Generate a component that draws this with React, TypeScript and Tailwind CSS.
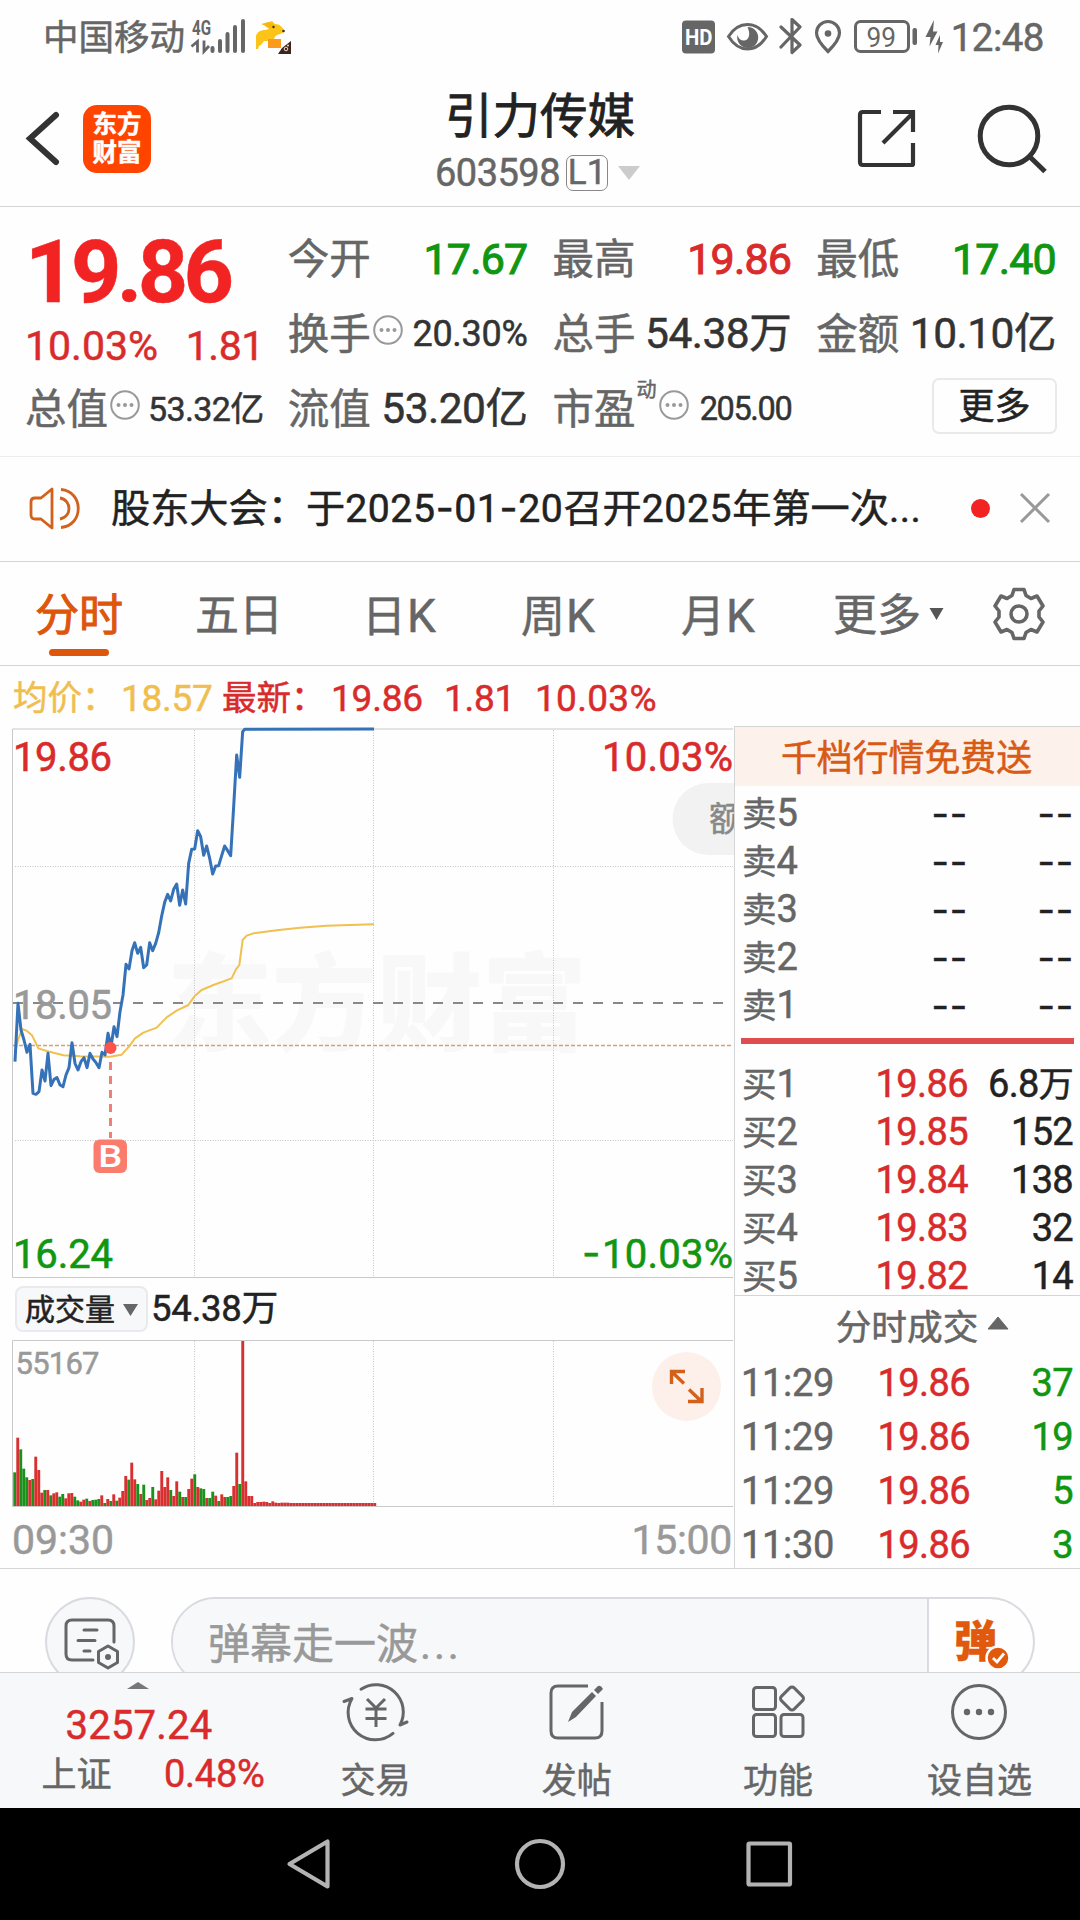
import type { ReactNode } from 'react';

const RED = '#d92b2b';

/* one-minute samples, [y] in chart units, 3 units per pixel */
const price = [
    [45, 1055], [54, 880], [63, 960], [72, 990], [81, 1027], [90, 1003], [99, 1150], [108, 1153], [117, 1145], [126, 1080],
    [135, 1113], [144, 1030], [153, 1127], [162, 1108], [171, 1103], [180, 1125], [189, 1130], [198, 1095], [207, 1073],
    [216, 998], [225, 1060], [234, 1080], [243, 1055], [252, 1043], [261, 1073], [270, 1030], [279, 1047], [288, 1058],
    [297, 1073], [306, 1027], [315, 1035], [324, 970], [333, 1010], [342, 950], [351, 980], [360, 905], [369, 855],
    [378, 763], [387, 777], [396, 722], [404, 698], [413, 730], [422, 712], [431, 773], [440, 765], [449, 698], [458, 722],
    [467, 700], [476, 668], [485, 618], [494, 577], [503, 553], [512, 573], [521, 538], [530, 522], [539, 586], [548, 540],
    [557, 582], [566, 460], [575, 418], [584, 417], [593, 362], [602, 380], [611, 436], [620, 408], [629, 445], [638, 492],
    [647, 468], [656, 467], [665, 437], [674, 408], [683, 422], [692, 437], [701, 290], [710, 135], [719, 202], [728, 65],
    [734, 58], [1122, 57],
];

const average = [
    [45, 1030], [54, 990], [66, 957], [80, 962], [96, 976], [106, 996], [115, 1015], [140, 1023], [190, 1036], [240, 1039],
    [330, 1040], [365, 1034], [385, 1012], [405, 985], [430, 968], [470, 953], [500, 922], [530, 902], [565, 885],
    [585, 857], [605, 840], [640, 825], [695, 805], [708, 778], [718, 765], [728, 690], [740, 677], [760, 670], [830, 661],
    [900, 653], [980, 647], [1050, 645], [1122, 643],
];

/* bar heights, g = falling minute, r = rising minute */
const volume =
    'g101 r205 g170 g112 g86 r78 g81 r148 r108 r40 g48 r48 g32 r38 r41 g28 g36 r23 r38 r39 g28 g17 r13 r19 g22 r15 g18 g19 g21 ' +
    'r32 g9 r21 g15 r35 g16 r25 r45 r90 g79 r130 r80 g66 r36 g64 r18 r24 g57 r20 r46 r105 r57 r86 g48 r30 r74 g43 r27 g27 r51 ' +
    'r82 g95 r57 g53 g51 r24 g24 g43 r31 g15 r35 r27 g27 g30 r60 r160 g66 r495 r74 r30 r30 r9 r12 r12 r13 r12 r9 r14 r10 r9 ' +
    'r10 r10 r10 r9 r9 r9 r9 r9 r9 r9 r9 r9 r9 r9 r9 r9 r9 r9 r9 r9 r9 r9 r9 r9 r9 r9 r9 r9 r9 r9 r9 r9';

const points = (list: number[][]) => list.map(([x, y]) => `${x / 3},${y / 3 + 710}`).join(' ');

const asks = ['5', '4', '3', '2', '1'];

const bids = [
    ['1', '19.86', '6.8万'],
    ['2', '19.85', '152'],
    ['3', '19.84', '138'],
    ['4', '19.83', '32'],
    ['5', '19.82', '14'],
];

const trades = [
    ['11:29', '37'],
    ['11:29', '19'],
    ['11:29', '5'],
    ['11:30', '3'],
];

function More() {
    return (
        <svg width="30" height="30" viewBox="0 0 30 30" className="relative -top-[5px] ml-[2px] shrink-0">
            <circle cx="15" cy="15" r="13.8" fill="none" stroke="#999" strokeWidth="2" />
            <g fill="#999"><circle cx="8.5" cy="15" r="2" /><circle cx="15" cy="15" r="2" /><circle cx="21.5" cy="15" r="2" /></g>
        </svg>
    );
}

function Stat({ label, children, className = '' }: { label: ReactNode; children: ReactNode; className?: string }) {
    return (
        <div className="flex items-center justify-between h-[75px]">
            <div className="flex items-center pt-[3px] text-[41.500px] text-[#666]">{label}</div>
            <div className={`pt-px text-[43px] tracking-[-0.8px] -mr-px ${className}`}>{children}</div>
        </div>
    );
}

function StatusBar() {
    return (
        <div className="flex items-center h-[76px] pl-[43px] pr-[36px] text-[#666]">
            <span className="pt-px text-[35.5px]">中国移动</span>
            <svg width="110" height="52" viewBox="188 12 110 52" className="ml-[3px]">
                <text x="192" y="34.500" fontSize="20" fontWeight="700" fill="#666" textLength="19" lengthAdjust="spacingAndGlyphs">4G</text>
                <path d="M191.500 46.500l6-5v11M204 40.500v11l5-5.500" fill="none" stroke="#666" strokeWidth="2.800" />
                <path d="M212.500 48v3M220 41v10M227.500 34v17M235 27v24M243 21v30" stroke="#666" strokeWidth="4" strokeLinecap="round" />
                <path d="M256 49v-13c1-4 5-6 9-6l4-1-4-3 1-3 6-2 3 3c5 0 7 3 9 6 1 2-1 3-4 4-5 1-6 4-6 7h-10l-3 4-2 1-1 3z" fill="#fcc419" />
                <path d="M261 24l8-2 6 4-4 2z" fill="#f5b70d" />
                <circle cx="273.500" cy="27" r="1.200" fill="#333" /><circle cx="283.500" cy="31" r="1.300" fill="#333" />
                <path d="M268 39h13v9h-13z" fill="#fb9a1c" />
                <path d="M278 54l4-6 9-7v13z" fill="#40241a" />
                <circle cx="286" cy="49" r="1.800" fill="none" stroke="#e8dcd6" /><circle cx="288" cy="45.500" r="1" fill="#e8dcd6" />
            </svg>
            <svg width="268" height="40" viewBox="678 18 268 40" className="ml-auto">
                <rect x="681" y="20.500" width="33" height="33" rx="4" fill="#666" />
                <text x="684" y="44.500" fontSize="21.500" fontWeight="700" fill="#fff" textLength="27.500" lengthAdjust="spacingAndGlyphs">HD</text>
                <path d="M727.500 36.500c5-8 12-12 19-12s14 4 19 12c-5 8-12 12.500-19 12.500s-14-4.500-19-12.500z" fill="none" stroke="#666" strokeWidth="3" />
                <path d="M746.500 27a10.500 10.500 0 1 1-10 8c1 4 4 6 7 5.500 5-1 6-7 3-13.500z" fill="#666" />
                <path d="M780 27l19 18-8 7.500v-33l8 7.500-19 20" fill="none" stroke="#666" strokeWidth="3.200" strokeLinecap="round" strokeLinejoin="round" />
                <path d="M827 51.500c-6-6-11.500-12-11.500-18.500a11.500 11.500 0 0 1 23 0c0 6.500-5.500 12.500-11.500 18.500z" fill="none" stroke="#666" strokeWidth="3.200" />
                <circle cx="827" cy="33.500" r="3.300" fill="#666" />
                <rect x="854.500" y="21.500" width="53" height="30" rx="5" fill="none" stroke="#666" strokeWidth="3" />
                <text x="865.500" y="46.500" fontSize="28" fill="#666" textLength="29.500" lengthAdjust="spacingAndGlyphs">99</text>
                <rect x="911.500" y="28" width="4.500" height="17" rx="2" fill="#666" />
                <path d="M933 20l-8.500 17h5l-1 9.500 8-15h-4.500zM939 35l-4.500 10h3l-.5 8.500 5-11.500h-3z" fill="#666" />
            </svg>
            <span className="ml-[4px] text-[38.500px] tracking-[-0.5px]">12:48</span>
        </div>
    );
}

function Header() {
    return (
        <div className="flex items-center h-[131px] pl-[25px] pr-[32px] pb-1 border-b border-[#d4d5d7]">
            <svg width="36" height="60" viewBox="25 110 36 60">
                <path d="M56 116L30 139.500 56 163" fill="none" stroke="#333" strokeWidth="6" strokeLinecap="round" />
            </svg>
            <div className="ml-[22px] w-[68px] h-[68px] rounded-[14px] bg-[#ff4400] flex flex-col items-center justify-center gap-[4px] text-white font-bold text-[24.5px]">
                <span>东方</span>
                <span>财富</span>
            </div>
            <div className="flex-1 flex flex-col items-center pl-[81px]">
                <h1 className="text-[47.500px] [-webkit-text-stroke:0.9px] text-[#222] mt-[8px] -ml-[9px]">引力传媒</h1>
                <div className="flex items-center mt-[12px] -ml-[14px] text-[#666] text-[38px]">
                    <span className="tracking-[-0.5px]">603598</span>
                    <span className="ml-[6px] h-9 w-[42px] rounded-[7px] border-[1.500px] border-[#888] flex items-center justify-center text-[35px]">L1</span>
                    <svg width="22" height="14" viewBox="0 0 22 14" className="ml-[10px]"><path d="M0 0h22L11 14z" fill="#ccc" /></svg>
                </div>
            </div>
            <svg width="60" height="62" viewBox="857 109 60 62" fill="none" stroke="#333" strokeWidth="4.200">
                <path d="M881 113h-18q-3 0-3 3v47q0 3 3 3h49q1 0 1-1v-21M893 113h20v20M912 115l-29 29" />
            </svg>
            <svg width="72" height="72" viewBox="976 103 72 72" fill="none" stroke="#333" strokeWidth="5" className="ml-[59px]">
                <circle cx="1009" cy="136" r="28.800" />
                <path d="M1030 157l15 14.500" />
            </svg>
        </div>
    );
}

function Quote() {
    return (
        <div className="flex h-[250px] pt-[14px] pl-[25px] pr-[25px] border-b border-[#eee]">
            <div className="w-[238px]">
                <div className="h-[100px] flex items-center pt-px text-[88px] font-bold tracking-[-4.600px] text-[#f22323]">19.86</div>
                <div className="h-[50px] flex items-center justify-between pt-px text-[41px] text-[#d92b2b]">
                    <span>10.03%</span><span className="-mr-px tracking-[-0.5px]">1.81</span>
                </div>
                <Stat label={<>总值<More /></>} className="text-[34px]! tracking-[-0.6px]! text-[#333]">53.32亿</Stat>
            </div>
            <div className="ml-[25px] w-[239px]">
                <Stat label="今开" className="[-webkit-text-stroke:1px] text-[#119611]">17.67</Stat>
                <Stat label={<>换手<More /></>} className="text-[36px]! tracking-[-0.3px]! text-[#333]">20.30%</Stat>
                <Stat label="流值" className="text-[42.500px]! text-[#333] tracking-[-0.5px]!">53.20亿</Stat>
            </div>
            <div className="ml-[26px] w-[238px]">
                <Stat label="最高" className="[-webkit-text-stroke:1px] text-[#d92b2b]">19.86</Stat>
                <Stat label="总手" className="text-[42.500px]! text-[#333] tracking-[-0.5px]!">54.38万</Stat>
                <Stat label={<>市盈<span className="relative -top-[20px] ml-px text-[20px]">动</span><More /></>} className="text-[32.500px]! tracking-[-1.400px]! text-[#333]">205.00</Stat>
            </div>
            <div className="ml-[26px] w-[239px]">
                <Stat label="最低" className="[-webkit-text-stroke:1px] text-[#119611]">17.40</Stat>
                <Stat label="金额" className="text-[42.500px]! text-[#333] tracking-[-0.5px]!">10.10亿</Stat>
                <div className="flex justify-end h-[75px] pt-[7px] -mr-[2px]">
                    <button className="w-[125px] h-[56px] rounded-[7px] border-2 border-[#e8e9ea] pt-[2px] text-[36px] text-[#222]">更多</button>
                </div>
            </div>
        </div>
    );
}

function Notice() {
    return (
        <div className="flex items-center h-[105px] pl-[28px] pr-[29px] border-b border-[#d4d5d7]">
            <svg width="54" height="46" viewBox="28 485 54 46" fill="none" stroke="#d2611c" strokeWidth="2.800" className="relative -top-px">
                <path d="M52 489v39l-11-9h-6q-4 0-4-4v-13q0-4 4-4h6z" strokeLinejoin="round" />
                <path d="M60 498c12 2 12 19 0 21M61 489.500c23 2 23 36 0 38" />
            </svg>
            <p className="ml-[29px] text-[39.200px] text-[#222] whitespace-nowrap">
                股东大会：<span className="-ml-px">于</span><span className="tracking-[0.6px]">2025<i className="not-italic font-[Inter]">-</i>01<i className="not-italic font-[Inter]">-</i>20</span>召开<span className="tracking-[0.6px]">2025</span>年第一次<span className="tracking-[0.4px]">...</span>
            </p>
            <span className="relative -top-px ml-auto w-[19px] h-[19px] rounded-full bg-[#f22323]" />
            <svg width="32" height="32" viewBox="0 0 32 32" className="relative -top-px ml-[29px]"><path d="M2 2l28 28M30 2L2 30" stroke="#999" strokeWidth="3" /></svg>
        </div>
    );
}

function Tabs() {
    return (
        <div className="flex items-center h-[104px] pl-[35px] pt-[4px] text-[44px] text-[#666] border-b border-[#d4d5d7]">
            <div className="relative w-[160px] text-[#dd560c] [-webkit-text-stroke:1px]">
                分时
                <span className="absolute left-[14px] top-[55px] w-[60px] h-[7px] rounded-full bg-[#dd560c]" />
            </div>
            <div className="w-[167px]">五日</div>
            <div className="w-[159px]">日<span className="text-[46px] ml-px">K</span></div>
            <div className="w-[160px]">周<span className="text-[46px] ml-px">K</span></div>
            <div className="w-[152px]">月<span className="text-[46px] ml-px">K</span></div>
            <div className="flex items-center">
                更多
                <svg width="15" height="12" viewBox="0 0 14 12" className="relative -top-[2px] ml-[8px]"><path d="M0 0h14L7 12z" fill="#555" /></svg>
            </div>
            <svg width="54" height="54" viewBox="-27 -27 54 54" fill="none" stroke="#666" strokeWidth="3.600" className="relative -top-[2px] ml-[48px]">
                <path d="M-5 -24.500H5L7 -18.500 12 -15.500 18 -18 24 -8 20 -3V3L24 8 18 18 12 15.500 7 18.500 5 24.500H-5L-7 18.500 -12 15.500 -18 18 -24 8 -20 3V-3L-24 -8 -18 -18 -12 -15.500 -7 -18.500Z" strokeLinejoin="round" />
                <circle r="8" />
            </svg>
        </div>
    );
}

function PriceChart() {
    return (
        <svg width="734" height="554" viewBox="0 726 734 554" className="block">
            <text x="167" y="1042" fontSize="106" fontWeight="900" fill="#f8f8f8" textLength="420" lengthAdjust="spacingAndGlyphs">东方财富</text>
            <path d="M733 729H12.500V1277.500H733" fill="none" stroke="#c9c9c9" />
            <path d="M194.500 730V1277M373.500 730V1277M553.500 730V1277M15 866.500H733M15 1140.500H733" stroke="#c4c4c4" strokeDasharray="1 1.500" />
            <path d="M13 1003H733" stroke="#888" strokeWidth="2" strokeDasharray="10 10" />
            <path d="M13 1045.500H733" stroke="#d59f7c" strokeWidth="1.500" strokeDasharray="4 2" />
            <text x="13" y="1018.500" fontSize="40" fill="#999" stroke="#999" strokeWidth="0.600" textLength="99">18.05</text>
            <polyline points={points(average)} fill="none" stroke="#f0c050" strokeWidth="2" strokeLinejoin="round" />
            <polyline points={points(price)} fill="none" stroke="#3572b8" strokeWidth="3" strokeLinejoin="round" />
            <circle cx="110.500" cy="1048" r="6" fill="#fb5549" />
            <path d="M110.500 1062V1138" stroke="#ee8074" strokeWidth="3" strokeDasharray="8 6" />
            <rect x="93.500" y="1139.500" width="33.500" height="33.500" rx="6" fill="#fb7c6c" />
            <text x="110.200" y="1167" fontSize="31" fontWeight="500" fill="#fff" textAnchor="middle" textLength="24" lengthAdjust="spacingAndGlyphs">B</text>
            <g fontSize="40" strokeWidth="0.600" fill={RED} stroke={RED}>
                <text x="13" y="771" textLength="99">19.86</text>
                <text x="602" y="771" textLength="131">10.03%</text>
            </g>
            <g fontSize="40" strokeWidth="0.600" fill="#119611" stroke="#119611">
                <text x="13" y="1267.500" textLength="100">16.24</text>
                <text x="602" y="1267.500" textLength="131">10.03%</text>
                <text x="582" y="1267" fontFamily="Inter">-</text>
            </g>
            <path d="M734 783H708.500a36 36 0 0 0 0 72H734z" fill="#f2f2f2" />
            <text x="709" y="831" fontSize="34" fill="#888" stroke="#888" strokeWidth="0.500">额</text>
        </svg>
    );
}

function VolumeChart() {
    return (
        <svg width="734" height="172" viewBox="0 1338 734 172" className="block">
            <path d="M733 1340.500H12.500V1506.500H733" fill="none" stroke="#c9c9c9" />
            <path d="M194.500 1341V1506M373.500 1341V1506M553.500 1341V1506" stroke="#c4c4c4" strokeDasharray="1 1.500" />
            <text x="15.500" y="1374" fontSize="31" fill="#999" stroke="#999" strokeWidth="0.500" textLength="84">55167</text>
            {volume.split(' ').map((bar, i) => {
                const h = Number(bar.slice(1)) / 3;
                return <rect key={i} x={13.3 + i * 3} y={1506 - h} width="2.900" height={h} fill={bar[0] === 'g' ? '#1a911a' : '#d83030'} />;
            })}
            <circle cx="686.500" cy="1386.500" r="34.500" fill="#fdf0ea" />
            <path d="M671.500 1384V1371.500H685M672 1372L684 1383.500M689 1389.500L701 1401M702 1388V1401.500H688" fill="none" stroke="#d2611c" strokeWidth="3.400" />
        </svg>
    );
}

function OrderBook() {
    return (
        <div className="w-[346px] h-[842px] overflow-hidden border-l border-t border-[#d4d5d7] text-[38px] text-[#666]">
            <div className="h-[59px] flex items-center justify-center bg-[#fdf1ec] text-[35.900px] text-[#d85a14] pr-[2px] pt-[7px]">千档行情免费送</div>
            <div className="pt-[3px] pl-[7px] pr-[6px]">
                {asks.map((n) => (
                    <div key={n} className="flex items-center h-[48.100px]">
                        <span className="w-[139px]"><b className="font-normal text-[34.500px]">卖</b>{n}</span>
                        <span className="w-[87px] text-right text-[#222] font-[Inter] tracking-[0.8px]">--</span>
                        <span className="flex-1 text-right text-[#222] font-[Inter] tracking-[0.8px]">--</span>
                    </div>
                ))}
            </div>
            <div className="mt-[9px] ml-[6px] mr-[6px] h-[6px] bg-[#e04d4f]" />
            <div className="pt-[15px] pl-[7px] pr-[7px] h-[252px] border-b border-[#d4d5d7]">
                {bids.map(([n, p, q]) => (
                    <div key={n} className="flex items-center h-[48.100px]">
                        <span className="w-[100px]"><b className="font-normal text-[34.500px]">买</b>{n}</span>
                        <span className="w-[126px] text-right text-[#d92b2b] tracking-[-0.6px]">{p}</span>
                        <span className="flex-1 text-right text-[#222] tracking-[-0.7px]">{q.replace('万', '')}{q.endsWith('万') && <b className="font-normal text-[35px]">万</b>}</span>
                    </div>
                ))}
            </div>
            <div className="h-[58px] pt-[7px] pl-[30px] flex items-center justify-center text-[35.700px]">
                分时成交
                <svg width="22" height="14" viewBox="0 0 22 14" className="ml-[9px] mb-[11px]"><path d="M11 1l10 12H1z" fill="#666" stroke="#666" strokeLinejoin="round" /></svg>
            </div>
            {trades.map(([t, q], i) => (
                <div key={i} className="relative top-[2px] flex items-center h-[54px] pl-[6px] pr-[7px]">
                    <span className="w-[101px] tracking-[-0.3px]">{t}</span>
                    <span className="w-[128px] text-right text-[#d92b2b] tracking-[-0.6px]">19.86</span>
                    <span className="flex-1 text-right text-[#119611] tracking-[-0.6px]">{q}</span>
                </div>
            ))}
        </div>
    );
}

function Chart() {
    return (
        <div className="h-[903px] border-b border-[#d4d5d7]">
            <div className="flex items-center h-[60px] pl-[13px] pt-[4px] text-[37px] text-[#d92b2b] whitespace-nowrap">
                <div className="flex items-center w-[209px] text-[#f0be50]"><span className="text-[34.500px] w-[108px]">均价：</span><span className="tracking-[-0.3px]">18.57</span></div>
                <div className="flex items-center w-[222px]"><span className="text-[34.500px] w-[109px]">最新：</span><span className="tracking-[-0.2px]">19.86</span></div>
                <span className="w-[91px] tracking-[-0.3px]">1.81</span>
                <span className="tracking-[0.3px]">10.03%</span>
            </div>
            <div className="flex">
                <div className="w-[734px]">
                    <PriceChart />
                    <div className="flex items-center h-[58px] pl-[15px] text-[36.500px] text-[#222]">
                        <div className="flex items-center w-[133px] h-[46px] pl-[8px] pt-px rounded-[8px] border-2 border-[#e8eaed] bg-[#f7f8fa] text-[30px]">
                            成交量
                            <svg width="15" height="12" viewBox="0 0 15 12" className="ml-[8px]"><path d="M0 0h15L7.500 12z" fill="#666" /></svg>
                        </div>
                        <span className="ml-[3px] pt-px tracking-[-0.2px]">54.38万</span>
                    </div>
                    <VolumeChart />
                    <div className="flex items-center justify-between h-[58px] pl-[12px] pt-[3px] pr-[2px] text-[41px] text-[#999]">
                        <span>09:30</span><span className="tracking-[-0.3px]">15:00</span>
                    </div>
                </div>
                <OrderBook />
            </div>
        </div>
    );
}

function Danmu() {
    return (
        <div className="flex h-[103px] pt-[28px] pl-[45px] overflow-hidden">
            <div className="w-[90px] h-[90px] shrink-0 rounded-full border-2 border-[#d9dbe0] bg-[#f7f8fa]">
                <svg width="86" height="86" viewBox="47 1599 86 86" fill="none" stroke="#666" strokeWidth="3">
                    <path d="M114 1642v-16q0-6-6-6h-36q-6 0-6 6v28q0 6 6 6h21M84 1630h13M78 1640.500h17M84 1651h6" strokeLinecap="round" />
                    <path d="M108 1646l9.500 5.500v11l-9.500 5.500-9.500-5.500v-11z" strokeLinejoin="round" />
                    <circle cx="108" cy="1657" r="3" fill="#666" stroke="none" />
                </svg>
            </div>
            <div className="ml-[36px] w-[864px] h-[90px] shrink-0 flex rounded-full border-2 border-[#d9dbe0] overflow-hidden">
                <div className="w-[756px] pl-[35px] pt-[5px] flex items-center bg-[#f7f8fa] border-r-2 border-[#d9dbe0] text-[42px] text-[#999]">弹幕走一波<span className="tracking-[2.800px] ml-[2px]">...</span></div>
                <div className="relative pl-[25px] pt-[22px] text-[43px] font-black text-[#e0590c]">
                    弹
                    <svg width="26" height="26" viewBox="-13 -13 26 26" className="absolute left-[56px] top-[46px]">
                        <circle r="11.500" fill="#e0590c" stroke="#fff" strokeWidth="2.500" />
                        <path d="M-5 0l4 4L6 -4.500" fill="none" stroke="#fff" strokeWidth="2.800" />
                    </svg>
                </div>
            </div>
        </div>
    );
}

function Tool({ label, children }: { label: string; children: ReactNode }) {
    return (
        <div className="w-[201.300px] flex flex-col items-center pt-[4px]">
            <svg width="70" height="70" viewBox="-35 -35 70 70" fill="none" stroke="#666" strokeWidth="3">{children}</svg>
            <span className="mt-[17px] text-[35px]">{label}</span>
        </div>
    );
}

function Toolbar() {
    return (
        <div className="flex h-[136px] border-t border-[#d4d5d9] bg-[#f7f8fa] text-[#666]">
            <div className="w-[275px] flex flex-col items-center">
                <svg width="22" height="7" viewBox="0 0 22 7" className="mt-[9px] ml-[2px]"><path d="M11 0l11 7H0z" fill="#777" /></svg>
                <span className="mt-[17px] ml-[3px] text-[40px] tracking-[0.200px] text-[#d92b2b]">3257.24</span>
                <div className="flex items-center mt-[9px] ml-[31px] w-[223px] justify-between text-[35px]">
                    <span className="pt-[3px]">上证</span><span className="text-[38px] tracking-[-0.3px] text-[#d92b2b]">0.48%</span>
                </div>
            </div>
            <Tool label="交易">
                <path d="M-15 -22.800A27.300 27.300 0 0 1 24 13L31 10M17 21.400A27.300 27.300 0 0 1 -24 -13.500L-32 -10.500" strokeLinecap="round" strokeLinejoin="round" />
                <path d="M-9 -13L0 -4L9 -13M0 -4V15M-10.500 -3H10.500M-10.500 6.500H10.500" />
            </Tool>
            <Tool label="发帖">
                <path d="M11 -26H-19Q-26 -26 -26 -19V19Q-26 26 -19 26H18Q25 26 25 19V-10" />
                <path d="M-9 10L-5 0L15 -20L19 -16L-1 5ZM17 -22L21 -26Q24 -27 26 -23L21 -18Z" fill="#666" stroke="none" />
            </Tool>
            <Tool label="功能">
                <rect x="-24.500" y="-24.500" width="22" height="22" rx="3" /><rect x="-24.500" y="2.500" width="22" height="22" rx="3" /><rect x="3" y="2.500" width="22" height="22" rx="3" />
                <rect x="-9" y="-9" width="18" height="18" rx="3" transform="translate(14 -13.500) rotate(45)" />
            </Tool>
            <Tool label="设自选">
                <circle r="26.500" />
                <g fill="#666" stroke="none"><circle cx="-12" r="3.200" /><circle r="3.200" /><circle cx="12" r="3.200" /></g>
            </Tool>
        </div>
    );
}

export default function App() {
    return (
        <div className="w-[1080px] h-[1920px] overflow-hidden bg-[#fefefe] leading-none [-webkit-text-stroke:0.5px] font-[Roboto,'Noto_Sans_CJK_SC',sans-serif]">
            <StatusBar />
            <Header />
            <Quote />
            <Notice />
            <Tabs />
            <Chart />
            <Danmu />
            <Toolbar />

            {/* system navigation */}
            <div className="h-[112px] bg-black flex items-center justify-center">
                <svg width="520" height="60" viewBox="280 1834 520 60" fill="none" stroke="#b3b3b3" strokeWidth="4.200" strokeLinejoin="round">
                    <path d="M289.500 1864L327.500 1841.500V1886.500Z" />
                    <circle cx="540" cy="1864" r="23" />
                    <rect x="748.500" y="1843.500" width="41.500" height="41" rx="1" />
                </svg>
            </div>
        </div>
    );
}
